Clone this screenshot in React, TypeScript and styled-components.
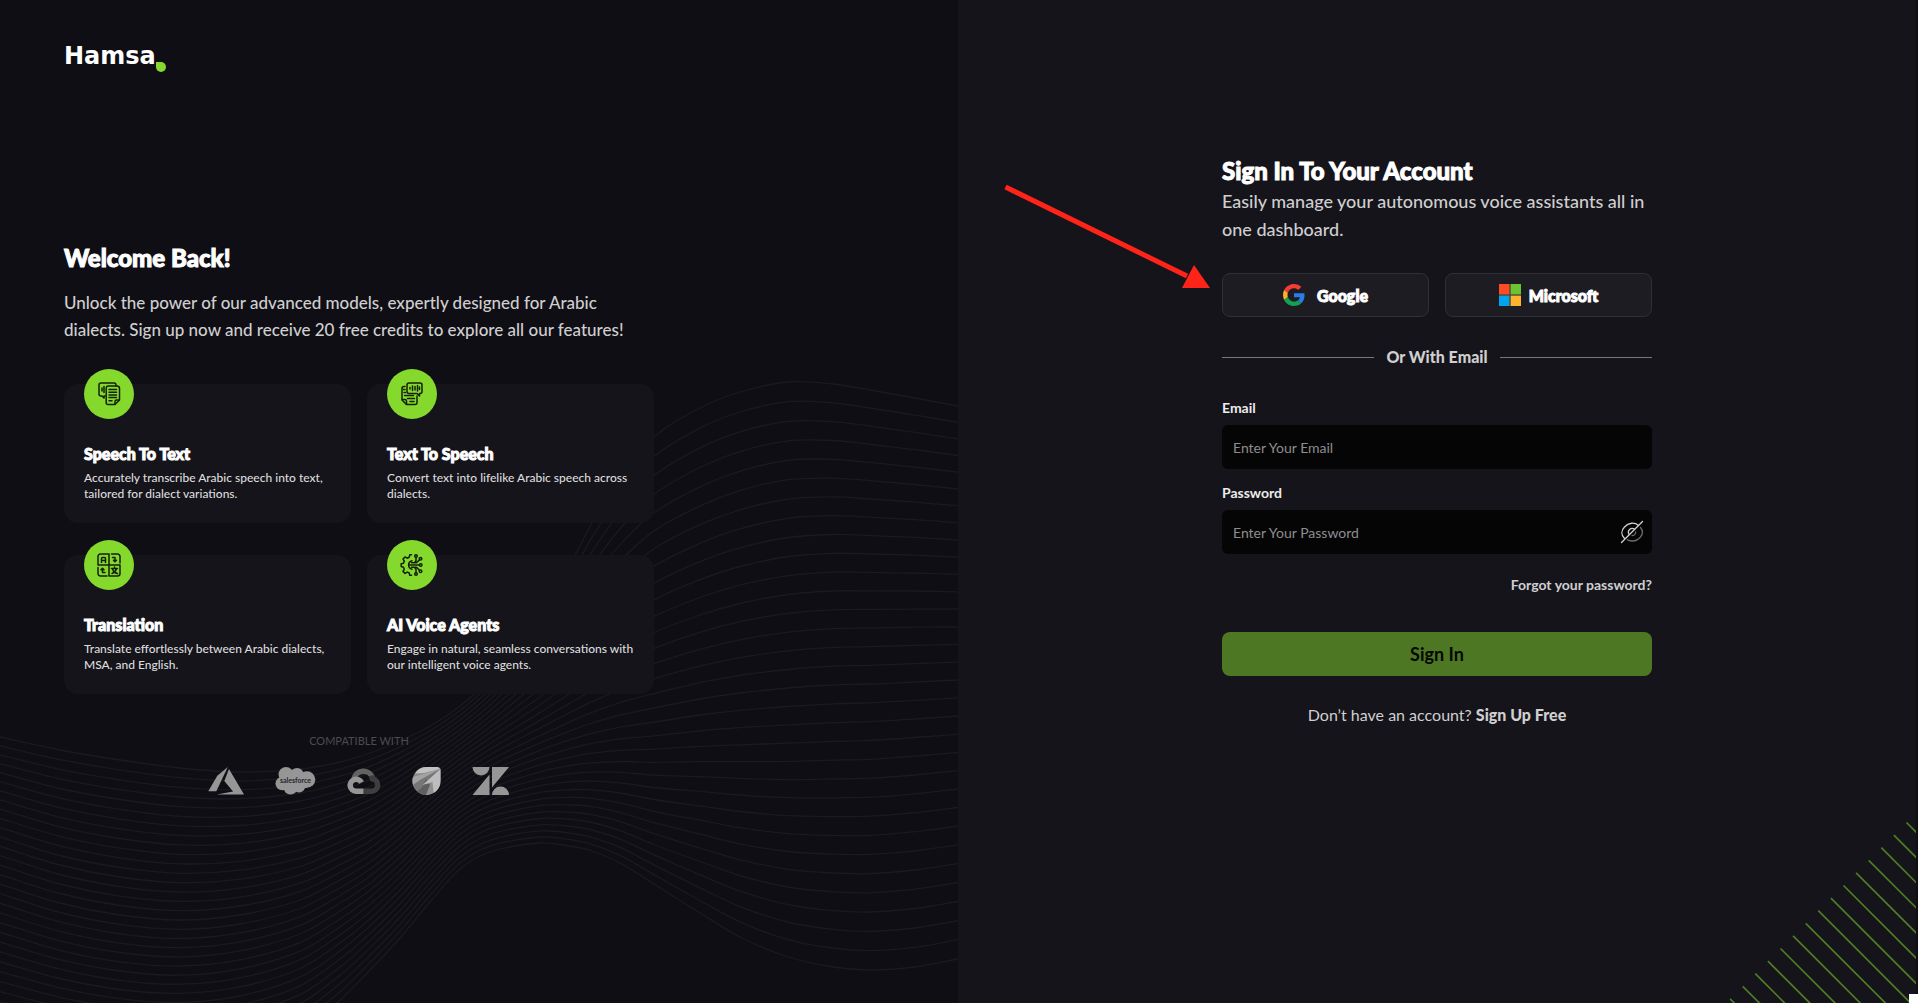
import React, { useState } from "react";
import styled, { createGlobalStyle } from "styled-components";

const GlobalStyle = createGlobalStyle`
  *, *::before, *::after { box-sizing: border-box; }
  body {
    margin: 0;
    background: #0f0e14;
    color: #fff;
    font-family: Lato, "Noto Sans", sans-serif;
    -webkit-font-smoothing: antialiased;
  }
  h1, h2, h3, p, ul { margin: 0; padding: 0; }
  button, input { font-family: inherit; }
  a { color: inherit; text-decoration: none; }
`;

const Page = styled.div`
  position: relative;
  display: grid;
  grid-template-columns: 1fr 1fr;
  min-height: 100vh;
  padding-right: 2px;
  overflow: hidden;
`;

const Showcase = styled.section`
  position: relative;
  padding: 40px 64px 64px;
  background: #0f0e14;
`;

const WaveLines = styled.svg`
  position: absolute;
  inset: 0;
  width: 100%;
  height: 100%;
  fill: none;
  stroke: #1b1a20;
  stroke-width: 1.3;
`;

const Brand = styled.a`
  position: relative;
  display: flex;
  align-items: flex-start;
  height: 32px;
  width: max-content;
  font: 700 24px/32px "DejaVu Sans", sans-serif;
`;

const BrandDrop = styled.svg`
  align-self: flex-end;
  width: 10px;
  height: 10px;
`;

const Intro = styled.div`
  position: relative;
  max-width: 590px;
  margin-top: 170px;
`;

const Heading = styled.h1`
  font-size: 24px;
  line-height: 32px;
  font-weight: 900;
  -webkit-text-stroke: 1px currentColor;
`;

const Lead = styled.p`
  font-size: 18px;
  line-height: 28px;
  font-weight: 500;
  color: #cfcfd0;
`;

const IntroLead = styled(Lead)`
  margin-top: 15px;
  font-size: 17px;
  line-height: 27px;
`;

const FeatureGrid = styled.ul`
  display: grid;
  grid-template-columns: 1fr 1fr;
  gap: 32px 16px;
  margin-top: 41px;
  list-style: none;
`;

const FeatureCard = styled.li`
  padding: 0 20px 20px;
  min-height: 139px;
  border-radius: 14px;
  background: #15141a;
`;

const FeatureBadge = styled.span`
  display: flex;
  align-items: center;
  justify-content: center;
  width: 50px;
  height: 50px;
  margin-top: -15px;
  border-radius: 50%;
  background: #84d92c;
`;

const FeatureIcon = styled.svg`
  width: 24px;
  height: 24px;
  fill: none;
  stroke: #14200a;
  stroke-width: 1.5;
  stroke-linecap: round;
  stroke-linejoin: round;
`;

const FeatureTitle = styled.h2`
  margin-top: 24px;
  font-size: 16px;
  line-height: 22px;
  font-weight: 900;
  -webkit-text-stroke: 1px currentColor;
`;

const FeatureText = styled.p`
  margin-top: 5px;
  font-size: 12px;
  line-height: 16px;
  font-weight: 500;
  color: #dcdcdd;
`;

const Partners = styled.div`
  display: flex;
  flex-direction: column;
  align-items: center;
  gap: 17px;
  margin-top: 39px;
`;

const PartnersLabel = styled.p`
  font-size: 11px;
  line-height: 16px;
  color: #4c4b50;
`;

const PartnerRow = styled.div`
  display: flex;
  align-items: center;
  gap: 31px;
`;

const PartnerLogo = styled.svg`
  display: block;
  height: 30px;
  fill: #969696;
`;

const SignInPanel = styled.main`
  position: relative;
  display: flex;
  justify-content: center;
  padding: 155px 32px 64px;
  background: #15141a;
`;

const Form = styled.form`
  width: 100%;
  max-width: 430px;
`;

const ProviderRow = styled.div`
  display: grid;
  grid-template-columns: 1fr 1fr;
  gap: 16px;
  margin-top: 30px;
`;

const ProviderButton = styled.button<{ $gap: number }>`
  display: flex;
  align-items: center;
  justify-content: center;
  gap: ${(p) => p.$gap}px;
  height: 44px;
  border: 1px solid #302f36;
  border-radius: 8px;
  background: #1d1c23;
  color: #fff;
  font-size: 16px;
  font-weight: 900;
  -webkit-text-stroke: 1px currentColor;
  cursor: pointer;
`;

const ProviderIcon = styled.svg`
  width: 22px;
  height: 22px;
`;

const Divider = styled.div`
  display: flex;
  align-items: center;
  gap: 12px;
  margin: 29px 0 31px;
  font-size: 16px;
  line-height: 22px;
  font-weight: 900;
  color: #cfcfd0;

  &::before,
  &::after {
    content: "";
    flex: 1;
    height: 1px;
    background: #77767b;
  }
`;

const Field = styled.div`
  display: flex;
  flex-direction: column;
  gap: 8px;
  margin-bottom: 15px;
`;

const Label = styled.label`
  font-size: 14px;
  line-height: 18px;
  font-weight: 700;
  color: #ececec;
`;

const InputShell = styled.div`
  display: flex;
  align-items: center;
  height: 44px;
  padding-right: 8px;
  border-radius: 6px;
  background: #050506;
`;

const Input = styled.input`
  flex: 1;
  min-width: 0;
  height: 100%;
  padding: 0 11px;
  border: 0;
  outline: 0;
  background: transparent;
  color: #fff;
  font-size: 14px;

  &::placeholder {
    color: #8d8d8f;
    opacity: 1;
  }
`;

const RevealButton = styled.button`
  display: flex;
  padding: 0;
  border: 0;
  background: none;
  cursor: pointer;

  svg {
    width: 24px;
    height: 24px;
    fill: none;
    stroke: #d2d2d2;
    stroke-width: 1.3;
    stroke-linecap: round;
  }
`;

const ForgotRow = styled.div`
  display: flex;
  justify-content: flex-end;
  margin-top: 22px;
  font-size: 14px;
  line-height: 18px;
  font-weight: 700;
  color: #cfcfd0;
`;

const SubmitButton = styled.button`
  width: 100%;
  height: 44px;
  margin-top: 38px;
  border: 0;
  border-radius: 8px;
  background: #4e7724;
  color: #050802;
  font-size: 18px;
  font-weight: 700;
  cursor: pointer;
`;

const SignUpLine = styled.p`
  margin-top: 28px;
  text-align: center;
  font-size: 16px;
  line-height: 22px;
  color: #cfcfd0;

  a {
    font-weight: 900;
  }
`;

const Stripes = styled.svg`
  position: absolute;
  right: 0;
  bottom: 0;
  width: 190px;
  height: 182px;
  stroke: #4f7d25;
  stroke-width: 1.7;
`;

const CornerTab = styled.span`
  position: absolute;
  right: 0;
  bottom: 0;
  width: 9px;
  height: 9px;
  background: #fff;
`;

const Pointer = styled.svg`
  position: absolute;
  top: 183px;
  right: calc(50% + 226px);
  width: 208px;
  height: 108px;
`;

/* Three key curves of the wave field; the rest are interpolated between them. */
const xs = [0, 60, 120, 180, 240, 300, 340, 370, 400, 430, 460, 490, 540, 575, 592, 620, 654, 700, 740, 788, 833, 870, 915, 958];
const upper = [737, 750, 760, 768, 772, 769, 762, 753, 741, 726, 706, 678, 612, 555, 523, 478, 437, 408, 392, 382, 384, 390, 398, 406];
const middle = [884, 903, 915, 920, 915, 900, 880, 862, 838, 810, 785, 766, 743, 729, 723, 715, 708, 699, 693, 688, 685, 684, 682, 680];
const lower = [1032, 1044, 1053, 1056, 1050, 1030, 1000, 970, 938, 902, 869, 852, 843, 847, 851, 863, 884, 913, 937, 957, 967, 970, 967, 959];
const WAVE_COUNT = 32;

function wavePath(index: number): string {
  const t = index / (WAVE_COUNT - 1);
  const m = 16 / (WAVE_COUNT - 1);
  const a = ((t - m) * (t - 1)) / m;
  const b = (t * (t - 1)) / (m * (m - 1));
  const c = (t * (t - m)) / (1 - m);
  const ys = xs.map((_, i) => a * upper[i] + b * middle[i] + c * lower[i]);
  const slope = (i: number) => {
    const p = Math.max(i - 1, 0);
    const n = Math.min(i + 1, xs.length - 1);
    return (ys[n] - ys[p]) / (xs[n] - xs[p]);
  };
  let d = `M${xs[0]} ${ys[0].toFixed(1)}`;
  for (let i = 0; i < xs.length - 1; i++) {
    const h = (xs[i + 1] - xs[i]) / 3;
    d += `C${(xs[i] + h).toFixed(1)} ${(ys[i] + slope(i) * h).toFixed(1)} ${(xs[i + 1] - h).toFixed(1)} ${(ys[i + 1] - slope(i + 1) * h).toFixed(1)} ${xs[i + 1]} ${ys[i + 1].toFixed(1)}`;
  }
  return d;
}

const waves = Array.from({ length: WAVE_COUNT }, (_, i) => wavePath(i));

const features = [
  {
    title: "Speech To Text",
    text: "Accurately transcribe Arabic speech into text, tailored for dialect variations.",
    icon: (
      <>
        <path d="M19 4V3a2 2 0 0 0-2-2H4a2 2 0 0 0-2 2v9a2 2 0 0 0 2 2h1l2 2v-2h1" />
        <path d="M5 6v3M7 4.500v6" />
        <path d="M11 4h9a2.500 2.500 0 0 1 2.500 2.500V18L18 22.500h-7A1.800 1.800 0 0 1 9.200 20.700V6A2 2 0 0 1 11 4Z" />
        <path d="M22 18h-2.500a1.500 1.500 0 0 0-1.500 1.500V22M12 7.500h7.500M12 10.200h7.500M12 12.900h7.500M12 15.600h7.500M12 18.800h3" />
      </>
    ),
  },
  {
    title: "Text To Speech",
    text: "Convert text into lifelike Arabic speech across dialects.",
    icon: (
      <>
        <path d="M9 1h11a2 2 0 0 1 2 2v6.500a2 2 0 0 1-2 2h-.500v2.500L17 11.500H9a2 2 0 0 1-2-2V3a2 2 0 0 1 2-2Z" />
        <path d="M10 5.500v1.500M12.500 4v4.500M15 4.500v3.500M17.500 3.500v5.500M19.500 5v2.500" />
        <path d="M5 4.500H4a2 2 0 0 0-2 2V18l4.500 4.500H15a2 2 0 0 0 2-2V14" />
        <path d="M2.500 17.500H5a1.500 1.500 0 0 1 1.500 1.500v3M3.500 7.500H5M4 10.500h1.500M4.500 13.500h9M7.500 16.500h7M10 19.500h4" />
      </>
    ),
  },
  {
    title: "Translation",
    text: "Translate effortlessly between Arabic dialects, MSA, and English.",
    icon: (
      <>
        <path d="M3.500 1H12v11H1V3.500A2.500 2.500 0 0 1 3.500 1ZM12 12h11v8.500a2.500 2.500 0 0 1-2.500 2.500H12Z" />
        <path d="M14.500 1h6A2.500 2.500 0 0 1 23 3.500V10M1 14.500v6A2.500 2.500 0 0 0 3.500 23H10" />
        <path d="M4.500 9.500V5.500a1 1 0 0 1 1-1h2a1 1 0 0 1 1 1v4M4.500 7.500h4" />
        <path d="M15.500 4.500H18V8.500M16.500 7.300 18 8.800l1.500-1.500M8 19.500H5.500v-4M4 16.800l1.500-1.600L7 16.800" />
        <path d="M14.500 15.500h6M17.500 14v1.500M19.500 15.500c-.500 2.500-2 4-4.500 5M15.500 15.500c.5 2.500 2.500 4.500 5 5" />
      </>
    ),
  },
  {
    title: "AI Voice Agents",
    text: "Engage in natural, seamless conversations with our intelligent voice agents.",
    icon: (
      <>
        <path d="M11.500 1.800H9.800l-.600 2.500-2 .900L5 3.900 3 6l1.300 2.200-.8 2-2.300.6v2.800l2.300.6.800 2L3 18.400l2 2 2.200-1.300 2 .9.600 2.300h1.700" />
        <path d="M12 7.800a4.300 4.300 0 0 0 0 8.400M9 12h10M11.500 9.800h3l1.500-2V4.500M11.500 14.200h3l1.500 2v3.500M14 9.800h2.500l3-3M14 14.200h2.500l3 3" />
        <circle cx="16" cy="3" r="1.300" />
        <circle cx="20.500" cy="5.700" r="1.300" />
        <circle cx="20.700" cy="12" r="1.300" />
        <circle cx="20.500" cy="18.300" r="1.300" />
        <circle cx="16" cy="21" r="1.300" />
      </>
    ),
  },
];

function PartnerLogos() {
  return (
    <PartnerRow>
      <PartnerLogo width="36" viewBox="0 0 36 30" role="img" aria-label="Azure">
        <path d="M19.800 1 9.300 9.700 0.300 25.200h8Z" />
        <path d="M21 3 36 28.500H8.700l16.400-3L16.300 15Z" />
      </PartnerLogo>
      <PartnerLogo width="41" viewBox="0 0 41 30" role="img" aria-label="Salesforce">
        <circle cx="11" cy="8.500" r="7.500" />
        <circle cx="22" cy="8.500" r="6.600" />
        <circle cx="32" cy="13.500" r="8.300" />
        <circle cx="7.300" cy="17.500" r="6.800" />
        <circle cx="15.500" cy="21.500" r="7" />
        <circle cx="24" cy="20" r="6.500" />
        <rect x="8" y="8" width="24" height="14" />
        <text x="20.500" y="16.500" textAnchor="middle" fontSize="7" fontWeight="700" fill="#26262a">salesforce</text>
      </PartnerLogo>
      <PartnerLogo width="34" viewBox="0 0 34 30" role="img" aria-label="Google Cloud">
        <path fill="none" stroke="#626262" strokeWidth="5.500" d="M7 12.500A9.800 9.800 0 0 1 25.500 11.300" />
        <path fill="none" stroke="#3e3e3f" strokeWidth="5.500" d="M24.600 9.500 25.500 12.800A6.300 6.300 0 0 1 24.500 25.300H16.500" />
        <path fill="none" stroke="#969696" strokeWidth="5.500" d="M16.500 25.300H9A6 6 0 1 1 14.500 16.500" />
      </PartnerLogo>
      <PartnerLogo width="29" viewBox="0 0 29 30" role="img" aria-label="Leaf">
        <path fill="#8a8a8a" d="M14 1H25.500A3 3 0 0 1 28.500 4V15A14 14 0 1 1 14 1Z" />
        <path fill="#c2c2c2" d="M14 1H25.500L28 3 12 7 3 7.500A14 14 0 0 1 14 1Z" />
        <path fill="#a2a2a2" d="M28 3 11 8 1 11A14 14 0 0 0 1 19Z" />
        <path fill="#767676" d="M28 3 8 14 1 19A14 14 0 0 0 5 25Z" />
        <path fill="#5f5f5f" d="M14 13 10 21l-5 4A14 14 0 0 0 14 29l4-10Z" />
        <path fill="#8f8f8f" d="M28 3 13 18l6-1-5 12a14 14 0 0 0 7-2Z" />
        <path fill="#bdbdbd" d="M28.500 3V15a14 14 0 0 1-7 12l-1-11-10 3Z" />
      </PartnerLogo>
      <PartnerLogo width="38" viewBox="0 0 38 30" role="img" aria-label="Zendesk">
        <path d="M0.500 1H17.500A8.500 8.500 0 0 1 0.500 1ZM17.500 8.500V29H0.500ZM20 1H37L20 21.500ZM20 29A8.500 8.500 0 0 1 37 29Z" />
      </PartnerLogo>
    </PartnerRow>
  );
}

export default function App() {
  const [visible, setVisible] = useState(false);

  return (
    <>
      <GlobalStyle />
      <Page>
        <Showcase>
          <WaveLines viewBox="0 0 958 1003" preserveAspectRatio="none" aria-hidden="true">
            {waves.map((d, i) => (
              <path key={i} d={d} />
            ))}
          </WaveLines>
          <Brand href="#">
            Hamsa
            <BrandDrop viewBox="0 0 10 10" aria-hidden="true">
              <path fill="#84d92c" d="M0 0H5A5 5 0 1 1 0 5Z" />
            </BrandDrop>
          </Brand>
          <Intro>
            <Heading>Welcome Back!</Heading>
            <IntroLead>
              Unlock the power of our advanced models, expertly designed for Arabic
              <br />
              dialects. Sign up now and receive 20 free credits to explore all our features!
            </IntroLead>
            <FeatureGrid>
              {features.map((f) => (
                <FeatureCard key={f.title}>
                  <FeatureBadge>
                    <FeatureIcon viewBox="0 0 24 24" aria-hidden="true">
                      {f.icon}
                    </FeatureIcon>
                  </FeatureBadge>
                  <FeatureTitle>{f.title}</FeatureTitle>
                  <FeatureText>{f.text}</FeatureText>
                </FeatureCard>
              ))}
            </FeatureGrid>
            <Partners>
              <PartnersLabel>COMPATIBLE WITH</PartnersLabel>
              <PartnerLogos />
            </Partners>
          </Intro>
        </Showcase>

        <SignInPanel>
          <Form onSubmit={(e) => e.preventDefault()}>
            <Heading>Sign In To Your Account</Heading>
            <Lead>Easily manage your autonomous voice assistants all in one dashboard.</Lead>
            <ProviderRow>
              <ProviderButton type="button" $gap={12}>
                <ProviderIcon viewBox="0 0 48 48" aria-hidden="true">
                  <path fill="#f43b35" d="M24 9.500c3.540 0 6.710 1.220 9.210 3.600l6.850-6.850C35.900 2.380 30.470 0 24 0 14.620 0 6.510 5.380 2.560 13.220l7.980 6.190C12.430 13.720 17.740 9.500 24 9.500z" />
                  <path fill="#2a7de9" d="M46.980 24.550c0-1.570-.15-3.090-.38-4.550H24v9.020h12.940c-.58 2.960-2.260 5.480-4.780 7.180l7.730 6c4.510-4.180 7.090-10.360 7.090-17.650z" />
                  <path fill="#fdb02b" d="M10.530 28.590c-.48-1.450-.76-2.990-.76-4.590s.27-3.140.76-4.590l-7.980-6.190C.92 16.460 0 20.120 0 24c0 3.880.92 7.540 2.560 10.780l7.970-6.190z" />
                  <path fill="#12a150" d="M24 48c6.480 0 11.930-2.130 15.890-5.810l-7.730-6c-2.150 1.450-4.920 2.300-8.160 2.300-6.260 0-11.570-4.220-13.470-9.910l-7.980 6.190C6.510 42.620 14.620 48 24 48z" />
                </ProviderIcon>
                Google
              </ProviderButton>
              <ProviderButton type="button" $gap={8}>
                <ProviderIcon viewBox="0 0 22 22" aria-hidden="true">
                  <path fill="#4f4a32" d="M0 0h22v22H0z" />
                  <path fill="#ff4a26" d="M0 0h10.300v10.300H0z" />
                  <path fill="#6cc332" d="M11.700 0H22v10.300H11.700z" />
                  <path fill="#00a3f0" d="M0 11.700h10.300V22H0z" />
                  <path fill="#ffb22e" d="M11.700 11.700H22V22H11.700z" />
                </ProviderIcon>
                Microsoft
              </ProviderButton>
            </ProviderRow>
            <Divider>Or With Email</Divider>
            <Field>
              <Label htmlFor="email">Email</Label>
              <InputShell>
                <Input id="email" type="email" placeholder="Enter Your Email" />
              </InputShell>
            </Field>
            <Field>
              <Label htmlFor="password">Password</Label>
              <InputShell>
                <Input id="password" type={visible ? "text" : "password"} placeholder="Enter Your Password" />
                <RevealButton type="button" aria-label="Show password" onClick={() => setVisible(!visible)}>
                  <svg viewBox="0 0 24 24" aria-hidden="true">
                    <path d="M1.500 22.500 22.500 1.500" />
                    <path d="M4.500 18.500C1 15 1 10.500 4.500 7 8.500 2.500 14.500 2 18.500 5.500M9.300 14.500A3.700 3.700 0 0 1 14.500 9.300" />
                    <path stroke="#6c6c6e" d="M20.500 7.500C23 10.500 23 14 20.500 17 17 21 12 21.800 7.500 19.800M15.700 12a3.700 3.700 0 0 1-3.700 3.700" />
                  </svg>
                </RevealButton>
              </InputShell>
            </Field>
            <ForgotRow>
              <a href="#">Forgot your password?</a>
            </ForgotRow>
            <SubmitButton type="submit">Sign In</SubmitButton>
            <SignUpLine>
              Don’t have an account? <a href="#">Sign Up Free</a>
            </SignUpLine>
          </Form>
          <Stripes viewBox="0 0 190 182" aria-hidden="true">
            {Array.from({ length: 15 }, (_, i) => {
              const x = 180.5 - i * 12.6;
              const y = 1.5 + i * 12.6;
              return <line key={i} x1={x} y1={y} x2={x + 190} y2={y + 190} />;
            })}
          </Stripes>
          <Pointer viewBox="0 0 208 108" aria-hidden="true">
            <path d="M2.500 4 184 93" stroke="#ff2419" strokeWidth="5" />
            <path d="M191 82 207 105 179 105Z" fill="#ff2419" />
          </Pointer>
        </SignInPanel>
        <CornerTab />
      </Page>
    </>
  );
}
